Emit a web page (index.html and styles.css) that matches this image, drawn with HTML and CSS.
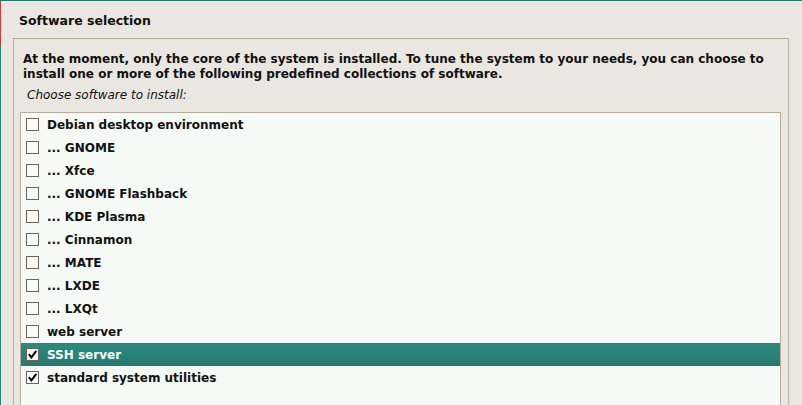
FILE: index.html
```html
<!DOCTYPE html>
<html>
<head>
<meta charset="utf-8">
<link rel="stylesheet" href="styles.css">
</head>
<body>
<div class="window">
  <div class="title">Software selection</div>
  <div class="frame">
    <p class="intro">At the moment, only the core of the system is installed. To tune the system to your needs, you can choose to install one or more of the following predefined collections of software.</p>
    <p class="prompt">Choose software to install:</p>
    <div class="list">
      <div class="row"><span class="box"></span><span>Debian desktop environment</span></div>
      <div class="row"><span class="box"></span><span>... GNOME</span></div>
      <div class="row"><span class="box"></span><span>... Xfce</span></div>
      <div class="row"><span class="box"></span><span>... GNOME Flashback</span></div>
      <div class="row"><span class="box"></span><span>... KDE Plasma</span></div>
      <div class="row"><span class="box"></span><span>... Cinnamon</span></div>
      <div class="row"><span class="box"></span><span>... MATE</span></div>
      <div class="row"><span class="box"></span><span>... LXDE</span></div>
      <div class="row"><span class="box"></span><span>... LXQt</span></div>
      <div class="row"><span class="box"></span><span>web server</span></div>
      <div class="row selected"><span class="box"><svg viewBox="0 0 11 11" width="11" height="11"><path d="M1.8 5.2 L4.4 8.3 L9.3 1.8" fill="none" stroke="#000" stroke-width="2"/></svg></span><span>SSH server</span></div>
      <div class="row"><span class="box"><svg viewBox="0 0 11 11" width="11" height="11"><path d="M1.8 5.2 L4.4 8.3 L9.3 1.8" fill="none" stroke="#000" stroke-width="2"/></svg></span><span>standard system utilities</span></div>
    </div>
  </div>
</div>
</body>
</html>
```
FILE: styles.css
```css
html, body {
  margin: 0;
  padding: 0;
  height: 100%;
  overflow: hidden;
  background: #e9e7e0;
}
.window {
  height: 100%;
  box-sizing: border-box;
  border-top: 1px solid #1f7d73;
  background:
    linear-gradient(to bottom, #c83c3c 0, #c83c3c 45px, #1f8a80 45px, #1f8a80 100%) left top / 1px 100% no-repeat,
    #e9e7e0;
  padding: 0 13px 0 13px;
  font-family: "DejaVu Sans", sans-serif;
  font-size: 12px;
  color: #111;
}
.title {
  font-weight: bold;
  font-size: 12.5px;
  padding: 12px 0 0 6px;
  height: 37px;
  box-sizing: border-box;
}
.frame {
  border: 1px solid #b8ac98;
  border-bottom: none;
  padding: 6px 7px 0 6px;
  height: 400px;
}
.intro {
  margin: 0;
  font-weight: bold;
  line-height: 15px;
  padding: 7px 0 0 3px;
}
.prompt {
  margin: 0;
  font-style: italic;
  line-height: 15px;
  padding: 6px 0 0 7px;
}
.list {
  margin-top: 9px;
  border: 1px solid #b8ac98;
  border-bottom: none;
  background: #f6faf6;
  padding-top: 0;
  height: 300px;
}
.row {
  display: flex;
  align-items: center;
  height: 23px;
  font-weight: bold;
  padding-left: 5px;
}
.box {
  width: 11px;
  height: 11px;
  border: 1px solid #6d6457;
  background: #f9fbf9;
  margin-right: 8px;
  display: flex;
  align-items: center;
  justify-content: center;
  flex: none;
}
.box svg { display: block; flex: none; }
.row.selected {
  background: linear-gradient(to bottom, #2b8a7f, #277a70);
  color: #fff;
}
```
